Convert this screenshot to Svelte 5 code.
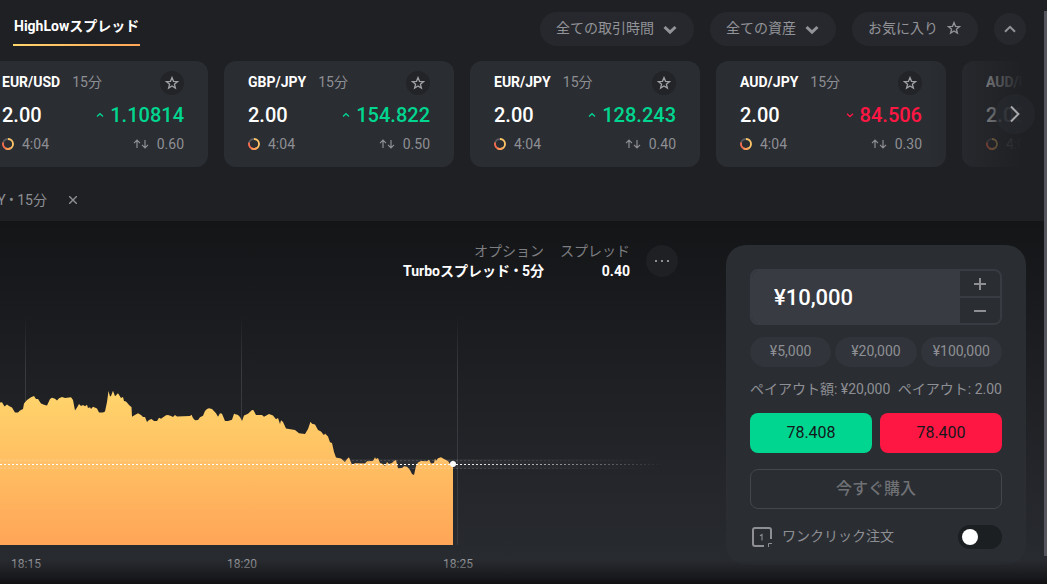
<script lang="ts">
   type Asset = { pair: string; rate: string; up: boolean; spread: string };

   const assets: Asset[] = [
      { pair: "EUR/USD", rate: "1.10814", up: true, spread: "0.60" },
      { pair: "GBP/JPY", rate: "154.822", up: true, spread: "0.50" },
      { pair: "EUR/JPY", rate: "128.243", up: true, spread: "0.40" },
      { pair: "AUD/JPY", rate: "84.506", up: false, spread: "0.30" },
      { pair: "AUD/USD", rate: "0.68214", up: true, spread: "0.40" },
   ];

   const presets = [5000, 20000, 100000];
   const times = [
      { x: 25, label: "18:15" },
      { x: 241, label: "18:20" },
      { x: 457, label: "18:25" },
   ];

   let amount = $state(10000);
   let oneClick = $state(false);

   const yen = (n: number) => "¥" + n.toLocaleString("en-US");

   function onAmount(e: Event) {
      amount = Number((e.currentTarget as HTMLInputElement).value.replace(/[^0-9]/g, ""));
   }

   const BASE = 545;
   const LAST = 464;

   const points =
      "0,402.5 2,402.3 4.5,406.5 7,404.5 9,406 12,407.5 15,412.5 18,412.5 20,410.5 23,409 24,403.5 27,400 31,397.3 34,396 36,399 38,399 41,403.5 44,404.8 47,405.5 50,399 52,397.8 55,398.8 57,400.5 59,398.3 62,397 65,398 71,397.3 73,400 75,410.5 77,407.5 79,404 81,406 83,405 85,406.2 87,404.7 88,408 90,407.2 91,409 93,406.7 97,408.5 99,412.5 103,412.5 105,411.5 107,402 108.5,391 110,396.5 111,396 113,390.7 115,396.3 118,393.3 121,398 123,397 124,401 126,401.5 130,406 131.5,407 132,416.7 134,415.5 138,413.3 141,415 143,417 145,417 147,422 149,420 151.5,419 154,421 157,421 159,417.7 161,418.7 166,415.3 168,415 171,416 173,417 175,415 177,416.5 190,416 191.5,414.7 193,418 195,420.3 198,420 200,417.3 203,415.7 205,411 207,409 209,408.3 212,409 216,413.3 218,416.8 220,413.3 222,413.8 225,421 228,421 232,419.7 234,413.8 238,415 240,417 242,421 244,415.5 248,413.7 252,410 253.5,410.3 256,415 262,415 264,416.8 269,414 273,415.5 276,419.3 278,418 280,424 281,420.3 283,422 286,428.5 295,430 299,433.3 305,434 308,429 310.5,421.7 312,423.7 315,424.5 318,430 321,431.5 324,435.3 325,433.5 328,436.5 330,442.3 332,443 334,452 336,457.5 341,458.5 345,462 347,459 349,457.3 352,464.7 355,463.3 365,463.5 367,461.3 373,461 375,457.3 376,459 378,458 380,463 383,464 385,466 387,462 389,464 392,463 394,461 396,460 398,468.3 402,468 404,466.3 407,466.8 410,470 412,474 414,475 416,466 418,462.5 421,461 427,461.3 429,459.7 431,463.5 434,463 435,458.5 436,461 438,458.3 441,457.3 444,459 448,461 450,464 453,464";
   const area = `0,${BASE} ${points} 453,${BASE}`;
</script>

{#snippet star()}
   <svg width="14" height="14" viewBox="0 0 14 14" fill="none" stroke="currentColor" stroke-width="1.3">
      <path d="M7 1.6 8.5 5.3 12.5 5.6 9.4 8.2 10.4 12.1 7 10 3.6 12.1 4.6 8.2 1.5 5.6 5.5 5.3Z" />
   </svg>
{/snippet}

{#snippet chevron()}
   <svg class="chevron" width="14" height="10" viewBox="0 0 14 10" fill="none" stroke="currentColor" stroke-width="3">
      <path d="M1.5 2 7 7.2 12.5 2" />
   </svg>
{/snippet}

<div class="page">
   <section class="markets">
      <header>
         <a class="mode" href="#spread">HighLowスプレッド</a>
         <div class="filters">
            <div class="filter">
               <select aria-label="取引時間"><option>全ての取引時間</option></select>
               {@render chevron()}
            </div>
            <div class="filter">
               <select aria-label="資産"><option>全ての資産</option></select>
               {@render chevron()}
            </div>
            <button class="favourites">お気に入り {@render star()}</button>
            <button class="round" aria-label="閉じる">
               <svg width="12" height="8" viewBox="0 0 12 8" fill="none" stroke="currentColor" stroke-width="2">
                  <path d="M1 6.8 6 1.8 11 6.8" />
               </svg>
            </button>
         </div>
      </header>

      <div class="carousel">
         <div class="viewport">
            <div class="track">
               {#each assets as a}
                  <article class="card">
                     <div class="row">
                        <span class="name"><strong>{a.pair}</strong><span class="term">15分</span></span>
                        <button class="star" aria-label="お気に入り">{@render star()}</button>
                     </div>
                     <div class="row big">
                        <span>2.00</span>
                        <span class="rate" class:down={!a.up}>
                           <svg width="8" height="6" viewBox="0 0 8 6" fill="none" stroke="currentColor" stroke-width="1.3">
                              <path d={a.up ? "M1 4.5 4 1.7 7 4.5" : "M1 1.7 4 4.5 7 1.7"} />
                           </svg>
                           {a.rate}
                        </span>
                     </div>
                     <div class="row small">
                        <span class="left">
                           <svg width="12" height="12" viewBox="0 0 12 12" fill="none" stroke-width="1.8">
                              <circle cx="6" cy="6" r="5" stroke="#5c5d62" />
                              <path d="M6 1A5 5 0 0 1 6 11" stroke="#ffc563" />
                              <path d="M6 11A5 5 0 0 1 1.2 4.6" stroke="#fb6b4b" />
                              <path d="M8.8 10.1A5 5 0 0 1 3.6 10.4" stroke="#ff9d57" />
                           </svg>
                           4:04
                        </span>
                        <span class="left">
                           <svg width="16" height="10" viewBox="0 0 16 10" fill="none" stroke="currentColor" stroke-width="1.2">
                              <path d="M4 9V1.5M1 4.2 4 1.2 7 4.2M12 1V8.5M9 5.8 12 8.8 15 5.8" />
                           </svg>
                           {a.spread}
                        </span>
                     </div>
                  </article>
               {/each}
            </div>
         </div>
         <button class="next" aria-label="次へ">
            <svg width="10" height="18" viewBox="0 0 10 18" fill="none" stroke="currentColor" stroke-width="2">
               <path d="M1 1.5 8.4 9 1 16.5" />
            </svg>
         </button>
      </div>

      <div class="tabs">
         <a class="tab" href="#aud"><span>AUD/JPY • 15分</span></a>
         <button class="close" aria-label="タブを閉じる">
            <svg width="8" height="8" viewBox="0 0 8 8" stroke="currentColor" stroke-width="1.4">
               <path d="M0 0 8 8M8 0 0 8" />
            </svg>
         </button>
      </div>
   </section>

   <section class="trade">
      <div class="chart">
         <svg class="plot" width="700" height="363" viewBox="0 221 700 363">
            <defs>
               <linearGradient id="fill" x1="0" y1="390" x2="0" y2="545" gradientUnits="userSpaceOnUse">
                  <stop offset="0" stop-color="#ffd56c" />
                  <stop offset="1" stop-color="#ffa557" />
               </linearGradient>
               <linearGradient id="grid" x1="0" y1="316" x2="0" y2="370" gradientUnits="userSpaceOnUse">
                  <stop offset="0" stop-color="#383a3f" stop-opacity="0" />
                  <stop offset="1" stop-color="#383a3f" />
               </linearGradient>
               <linearGradient id="band" x1="453" y1="0" x2="664" y2="0" gradientUnits="userSpaceOnUse">
                  <stop offset="0" stop-color="#fff" />
                  <stop offset="1" stop-color="#fff" stop-opacity="0" />
               </linearGradient>
            </defs>
            {#each times as t}
               <rect x={t.x} y="316" width="1" height="229" fill="url(#grid)" />
               <text x={t.x + 1} y="568" text-anchor="middle">{t.label}</text>
            {/each}
            <polygon points={area} fill="url(#fill)" />
            <rect x="0" y="459" width="664" height="10" fill="url(#band)" opacity="0.05" />
            <g stroke="url(#band)" stroke-dasharray="2 2">
               <path d={`M0 ${LAST - 3.5}H664M0 ${LAST + 4.5}H664`} opacity="0.13" />
               <path d={`M0 ${LAST + 0.5}H664`} />
            </g>
            <circle cx="453" cy={LAST} r="3" fill="#fff" />
         </svg>
         <div class="info">
            <dl>
               <dt>オプション</dt>
               <dd>Turboスプレッド • 5分</dd>
            </dl>
            <dl>
               <dt>スプレッド</dt>
               <dd>0.40</dd>
            </dl>
            <button class="round more" aria-label="メニュー">
               <svg width="16" height="4" viewBox="0 0 16 4" fill="currentColor">
                  <path d="M1 1h2v2H1zM7 1h2v2H7zM13 1h2v2h-2z" />
               </svg>
            </button>
         </div>
      </div>

      <aside class="order">
         <div class="amount">
            <input aria-label="金額" value={yen(amount)} onchange={onAmount} />
            <div class="steps">
               <button aria-label="増やす" onclick={() => (amount += 1000)}>
                  <svg width="12" height="12" viewBox="0 0 12 12" stroke="currentColor" stroke-width="2"><path d="M6 0V12M0 6H12" /></svg>
               </button>
               <button aria-label="減らす" onclick={() => (amount = Math.max(1000, amount - 1000))}>
                  <svg width="12" height="12" viewBox="0 0 12 12" stroke="currentColor" stroke-width="2"><path d="M0 6H12" /></svg>
               </button>
            </div>
         </div>
         <div class="presets">
            {#each presets as p}
               <button onclick={() => (amount = p)}>{yen(p)}</button>
            {/each}
         </div>
         <div class="payout">
            <span>ペイアウト額: {yen(amount * 2)}</span>
            <span>ペイアウト: 2.00</span>
         </div>
         <div class="sides">
            <button class="high">78.408</button>
            <button class="low">78.400</button>
         </div>
         <button class="buy">今すぐ購入</button>
         <label class="oneclick">
            <svg width="20" height="20" viewBox="0 0 20 20" fill="none" stroke="currentColor" stroke-width="2">
               <path d="M12 19H3Q1 19 1 17V3Q1 1 3 1H17Q19 1 19 3V12" />
               <path d="M16.5 20V16.5H20" stroke-width="1" />
               <path d="M8 8.7 10 7.5V13.5" stroke-width="1.1" />
            </svg>
            <span>ワンクリック注文</span>
            <input type="checkbox" role="switch" bind:checked={oneClick} />
         </label>
      </aside>
   </section>
   <div class="shade"></div>
   <div class="scrollbar"></div>
</div>

<style>
   :global(body) {
      background: #1f2024;
   }

   .page {
      position: relative;
      min-height: 100vh;
      display: flex;
      flex-direction: column;
      overflow: hidden;
      color: #fff;
      font: 14px/20px Roboto, "Noto Sans CJK JP", sans-serif;
   }

   button,
   select,
   input {
      font: inherit;
      color: inherit;
      border: 0;
      margin: 0;
      padding: 0;
      background: none;
   }

   button {
      display: flex;
      align-items: center;
      justify-content: center;
      cursor: pointer;
   }

   svg {
      display: block;
      flex: none;
   }

   a {
      color: inherit;
      text-decoration: none;
   }

   .markets {
      background: #1f2024;
   }

   header {
      display: flex;
      justify-content: space-between;
      align-items: center;
      padding: 12px 21px 15px 13px;
   }

   .mode {
      height: 28px;
      padding: 0 1px 4px;
      line-height: 28px;
      font-weight: 700;
      border-bottom: 2px solid;
      border-image: linear-gradient(90deg, #ffd56c, #ffa557) 1;
   }

   .filters {
      display: flex;
      align-items: center;
      gap: 16px;
      color: #929398;
   }

   .filter {
      position: relative;
   }

   .filter select {
      appearance: none;
      display: block;
      height: 34px;
      padding: 0 40px 2px 16px;
      border-radius: 17px;
      background: #27282d;
   }

   .chevron {
      position: absolute;
      right: 17px;
      top: 13px;
      pointer-events: none;
   }

   .favourites {
      height: 34px;
      padding: 0 17px 2px 16px;
      gap: 9px;
      border-radius: 17px;
      background: #27282d;
   }

   .round {
      width: 32px;
      height: 32px;
      border-radius: 50%;
      background: #27282d;
   }

   .carousel {
      position: relative;
   }

   .viewport {
      position: relative;
      margin-right: 24px;
      overflow: hidden;
   }

   /* fades the last card into the page */
   .viewport::after {
      content: "";
      position: absolute;
      inset: 0 0 0 auto;
      width: 96px;
      background: linear-gradient(90deg, rgba(31, 32, 36, 0), #1f2024);
      pointer-events: none;
   }

   .track {
      display: flex;
      gap: 16px;
      margin-left: -22px;
   }

   .card {
      flex: 0 0 230px;
      box-sizing: border-box;
      padding: 10px 24px 12px;
      display: grid;
      gap: 8px;
      border-radius: 12px;
      background: #2a2d32;
   }

   .row {
      display: flex;
      justify-content: space-between;
      align-items: center;
   }

   .name {
      padding-bottom: 2px;
   }

   .name strong {
      font-weight: 700;
   }

   .term {
      margin-left: 12px;
      color: #8e8f94;
   }

   .star {
      width: 24px;
      height: 24px;
      border-radius: 50%;
      background: #222428;
      color: #a0a1a5;
   }

   .big {
      font-size: 20px;
      line-height: 24px;
      font-weight: 500;
   }

   .rate {
      display: flex;
      align-items: center;
      gap: 6px;
      color: #00d690;
   }

   .rate.down {
      color: #ff1744;
   }

   .small {
      line-height: 18px;
      padding-bottom: 2px;
      color: #8e8f94;
   }

   .left {
      display: flex;
      align-items: center;
      gap: 8px;
   }

   .next {
      position: absolute;
      right: 12px;
      top: 33px;
      width: 40px;
      height: 40px;
      border-radius: 50%;
      background: rgba(38, 42, 46, 0.6);
      color: #a8a9ac;
   }

   .tabs {
      display: flex;
      align-items: center;
      gap: 16px;
      height: 42px;
      padding-top: 12px;
      color: #8e8f94;
   }

   .tab {
      display: flex;
      justify-content: flex-end;
      width: 47px;
      overflow: hidden;
      white-space: nowrap;
   }

   .close {
      width: 20px;
      height: 20px;
   }

   .trade {
      flex: 1;
      display: flex;
      align-items: flex-start;
      padding: 24px 21px 19px 0;
      position: relative;
      background: linear-gradient(#141517, #1f2125 50%, #292c31);
   }

   .chart {
      flex: 1;
      min-width: 0;
   }

   .plot {
      position: absolute;
      left: 0;
      top: 0;
   }

   .plot text {
      font-size: 12px;
      fill: #97989c;
   }

   .info {
      position: relative;
      display: flex;
      justify-content: flex-end;
      gap: 16px;
      padding-right: 48px;
   }

   dl {
      margin: -4px 0 0;
      text-align: right;
   }

   dt {
      color: #7d7e82;
   }

   dd {
      margin: 0;
      font-weight: 700;
   }

   .more {
      background: #1f2024;
      color: #8e8f94;
   }

   .order {
      flex: none;
      box-sizing: border-box;
      width: 300px;
      padding: 24px 24px 16px;
      border-radius: 20px;
      background: #2a2d32;
      color: #8e8f94;
   }

   .amount {
      display: flex;
      height: 56px;
      box-sizing: border-box;
      border: 2px solid #383b42;
      border-radius: 8px;
      overflow: hidden;
   }

   .amount input {
      flex: 1;
      min-width: 0;
      padding-left: 22px;
      background: #383b42;
      color: #fff;
      font-size: 22px;
      font-weight: 500;
   }

   .steps {
      width: 40px;
      display: grid;
      grid-template-rows: 1fr 1fr;
      gap: 2px;
      background: #383b42;
   }

   .steps button {
      background: #2a2d32;
   }

   .presets {
      display: grid;
      grid-template-columns: repeat(3, 1fr);
      gap: 4px;
      margin: 12px 0;
   }

   .presets button {
      height: 30px;
      padding-bottom: 2px;
      border-radius: 15px;
      background: #31343a;
   }

   .payout {
      display: flex;
      justify-content: space-between;
      white-space: nowrap;
   }

   .sides {
      display: grid;
      grid-template-columns: 1fr 1fr;
      gap: 8px;
      margin: 14px 0 16px;
   }

   .sides button {
      height: 40px;
      border-radius: 8px;
      color: #15171a;
      font-size: 16px;
   }

   .sides .high {
      background: #00d690;
   }

   .sides .low {
      background: #ff1744;
   }

   .buy {
      width: 100%;
      height: 40px;
      border: 1px solid #43464b;
      border-radius: 8px;
      color: #6f7175;
      font-size: 16px;
      font-weight: 500;
   }

   .oneclick {
      display: flex;
      align-items: center;
      gap: 10px;
      margin: 16px 0 0 2px;
   }

   .oneclick span {
      padding-bottom: 2px;
   }

   .oneclick input {
      appearance: none;
      display: flex;
      align-items: center;
      width: 44px;
      height: 24px;
      margin-left: auto;
      padding: 0 4px;
      box-sizing: border-box;
      border-radius: 12px;
      background: #1c1f21;
      cursor: pointer;
   }

   .oneclick input::before {
      content: "";
      width: 16px;
      height: 16px;
      border-radius: 50%;
      background: #fff;
   }

   .oneclick input:checked {
      justify-content: flex-end;
      background: #00d690;
   }

   .shade {
      position: absolute;
      inset: auto 0 0;
      height: 24px;
      background: linear-gradient(transparent, #111114);
      pointer-events: none;
   }

   .scrollbar {
      position: absolute;
      right: 0;
      top: 11px;
      bottom: 28px;
      width: 3px;
      background: #55565d;
   }
</style>
